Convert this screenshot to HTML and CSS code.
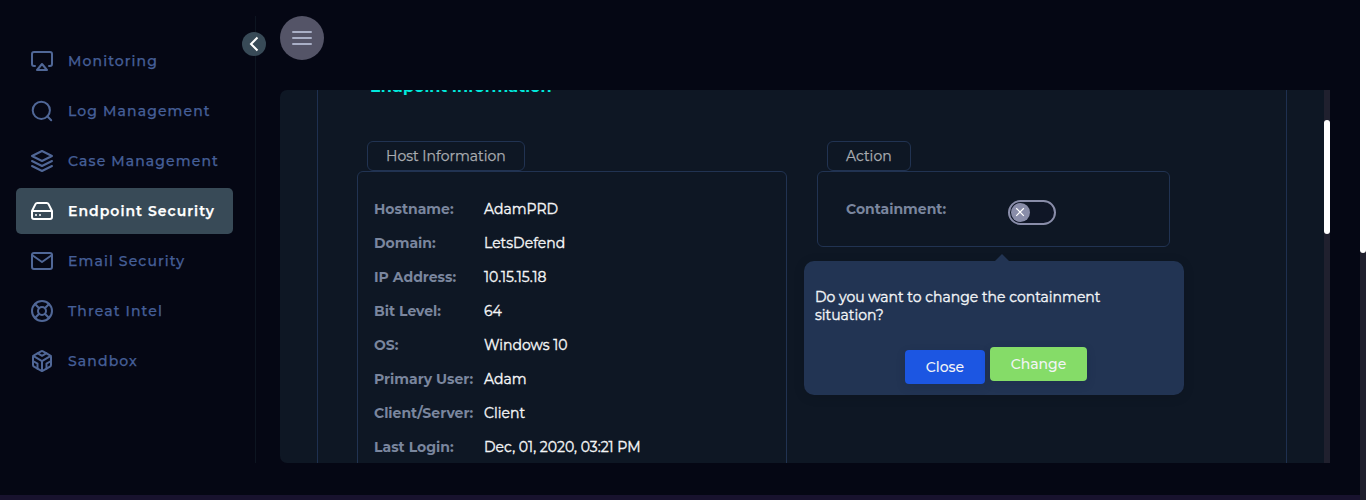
FILE: index.html
```html
<!DOCTYPE html>
<html lang="en">
<head>
<meta charset="utf-8">
<title>Endpoint Security</title>
<link rel="stylesheet" href="styles.css">
</head>
<body>
<div class="app">
  <div class="main">
    <aside class="sidebar">
      <nav class="nav">
        <a class="item"><svg class="icon" viewBox="0 0 24 24"><path d="M5 17H4a2 2 0 0 1-2-2V5a2 2 0 0 1 2-2h16a2 2 0 0 1 2 2v10a2 2 0 0 1-2 2h-1"/><path d="M12 15l5 6H7z"/></svg><span>Monitoring</span></a>
        <a class="item"><svg class="icon" viewBox="0 0 24 24"><circle cx="11.3" cy="11.3" r="8.6"/><path d="M21.2 21.2l-3.9-3.9"/></svg><span>Log Management</span></a>
        <a class="item"><svg class="icon" viewBox="0 0 24 24"><path d="M12 2L2 7l10 5 10-5z"/><path d="M2 17l10 5 10-5M2 12l10 5 10-5"/></svg><span>Case Management</span></a>
        <a class="item active"><svg class="icon" viewBox="0 0 24 24"><path d="M22 12H2M5.45 5.11L2 12v6a2 2 0 0 0 2 2h16a2 2 0 0 0 2-2v-6l-3.45-6.89A2 2 0 0 0 16.76 4H7.24a2 2 0 0 0-1.79 1.11zM6 16h.01M10 16h.01"/></svg><span>Endpoint Security</span></a>
        <a class="item"><svg class="icon" viewBox="0 0 24 24"><path d="M4 4h16a2 2 0 0 1 2 2v12a2 2 0 0 1-2 2H4a2 2 0 0 1-2-2V6a2 2 0 0 1 2-2z"/><path d="M22 6l-10 7L2 6"/></svg><span>Email Security</span></a>
        <a class="item"><svg class="icon" viewBox="0 0 24 24"><circle cx="12" cy="12" r="10"/><circle cx="12" cy="12" r="4"/><path d="M4.93 4.93l4.24 4.24M14.83 14.83l4.24 4.24M14.83 9.17l4.24-4.24M4.93 19.07l4.24-4.24"/></svg><span>Threat Intel</span></a>
        <a class="item"><svg class="icon" viewBox="0 0 24 24"><path d="M21 16V8a2 2 0 0 0-1-1.73l-7-4a2 2 0 0 0-2 0l-7 4A2 2 0 0 0 3 8v8a2 2 0 0 0 1 1.73l7 4a2 2 0 0 0 2 0l7-4A2 2 0 0 0 21 16z"/><path d="M7.5 4.21l4.5 2.6 4.5-2.6M7.5 19.79V14.6L3 12M21 12l-4.5 2.6v5.19M3.27 6.96L12 12.01l8.73-5.05M12 22.08V12"/></svg><span>Sandbox</span></a>
      </nav>
      <button class="collapse" aria-label="Collapse"><svg viewBox="0 0 24 24"><path d="M15.5 5.5l-6.5 6.5 6.5 6.5"/></svg></button>
    </aside>
    <main class="content">
      <button class="menu" aria-label="Menu"><i></i><i></i><i></i></button>
      <section class="panel">
        <div class="frame">
          <h2 class="heading">Endpoint Information</h2>
          <div class="columns">
            <div class="host">
              <div class="tab host-tab"><span>Host Information</span></div>
              <dl class="card details">
                <dt>Hostname:</dt><dd>AdamPRD</dd>
                <dt>Domain:</dt><dd>LetsDefend</dd>
                <dt>IP Address:</dt><dd>10.15.15.18</dd>
                <dt>Bit Level:</dt><dd>64</dd>
                <dt>OS:</dt><dd>Windows 10</dd>
                <dt>Primary User:</dt><dd>Adam</dd>
                <dt>Client/Server:</dt><dd>Client</dd>
                <dt>Last Login:</dt><dd>Dec, 01, 2020, 03:21 PM</dd>
              </dl>
            </div>
            <div class="action">
              <div class="tab action-tab"><span>Action</span></div>
              <div class="card containment">
                <span class="label">Containment:</span>
                <span class="switch"><svg viewBox="0 0 20 20"><path d="M5.5 5.5l8 8M13.5 5.5l-8 8"/></svg></span>
              </div>
              <div class="popover">
                <p class="question">Do you want to change the containment<br>situation?</p>
                <div class="buttons"><button class="btn close">Close</button><button class="btn change">Change</button></div>
              </div>
            </div>
          </div>
        </div>
        <div class="track"><div class="thumb"></div></div>
      </section>
    </main>
  </div>
  <div class="page-track"><div class="page-thumb"></div></div>
</div>
</body>
</html>
```
FILE: styles.css
```css
* { box-sizing: border-box; }
body { margin: 0; background: #050714; font-family: Montserrat, Inter, "Open Sans", sans-serif; font-size: 14px; color: #fff; overflow: hidden; }
button { border: 0; padding: 0; font: inherit; color: inherit; }
.app { display: flex; height: 500px; }
.main { display: flex; width: 1360px; border-bottom: 5px solid #18122e; }
.sidebar { position: relative; width: 256px; height: 447px; margin-top: 16px; padding: 22px 22px 0 16px; border-right: 1px solid #0d1521; }
.nav { display: flex; flex-direction: column; gap: 4px; }
.item { display: flex; align-items: center; gap: 14px; height: 46px; padding-left: 14px; border-radius: 5px; color: #455f98; font-weight: 500; letter-spacing: 1.12px; white-space: nowrap; -webkit-text-stroke: .25px currentColor; }
.active { background: #384a57; color: #fff; font-weight: 600; width: 217px; letter-spacing: 1.03px; }
.icon { width: 24px; height: 24px; flex: none; fill: none; stroke: #506797; stroke-width: 2; stroke-linecap: round; stroke-linejoin: round; }
.active .icon { stroke: #fff; }
.collapse { position: absolute; right: -11px; top: 16px; width: 24px; height: 24px; border-radius: 50%; background: #384a57; }
.collapse svg { display: block; width: 24px; height: 24px; fill: none; stroke: #fff; stroke-width: 2; }
.content { padding: 16px 0 0 24px; }
.menu { display: flex; flex-direction: column; align-items: center; justify-content: center; gap: 4px; width: 44px; height: 44px; border-radius: 50%; background: #545467; }
.menu i { width: 20px; height: 2px; background: #a9afc6; border-radius: 1px; }
.panel { display: flex; justify-content: space-between; width: 1050px; height: 373px; margin-top: 30px; border-radius: 7px 0 0 7px; background: #0e1724; overflow: hidden; }
.frame { width: 970px; margin-left: 37px; padding-left: 39px; border: 1px solid #1e3050; border-width: 0 1px; }
.heading { margin: -13px 0 0 13px; height: 20px; font-size: 16px; line-height: 20px; font-weight: 700; color: #00e8dc; white-space: nowrap; }
.columns { display: flex; gap: 30px; margin-top: 44px; }
.host { width: 430px; }
.action { position: relative; width: 353px; }
.tab { display: flex; align-items: center; height: 30px; margin-left: 10px; padding-left: 18px; border: 1px solid #213352; border-radius: 6px; color: #a9acb0; -webkit-text-stroke: .25px currentColor; }
.host-tab { width: 158px; }
.action-tab { width: 84px; }
.card { border: 1px solid #213352; border-radius: 6px; margin: 0; }
.details { display: grid; grid-template-columns: 110px 1fr; grid-auto-rows: 34px; align-items: center; height: 310px; padding: 20px 0 0 16px; white-space: nowrap; }
.details dt, .label { color: #7a869e; font-weight: 700; }
.details dd { margin: 0; color: #f4f5f6; font-weight: 400; -webkit-text-stroke: .35px currentColor; }
.containment { display: flex; height: 76px; padding: 28px 0 0 28px; }
.label { width: 162px; height: 18px; line-height: 18px; white-space: nowrap; }
.switch { width: 48px; height: 25px; border: 2px solid #898da9; border-radius: 13px; padding: 1px; background: #0f1626; }
.switch svg { display: block; width: 19px; height: 19px; border-radius: 50%; background: #898da9; stroke: #fff; stroke-width: 1.3; fill: none; }
.popover { position: absolute; left: -13px; top: 120px; width: 380px; height: 134px; padding: 27px 11px 0; border-radius: 10px; background: #223453; box-shadow: 0 2px 12px rgba(0,0,0,.12); color: #f2f4f7; }
.popover::before { content: ""; position: absolute; left: 191px; top: -7px; border: 7px solid transparent; border-top: 0; border-bottom-color: #223453; }
.question { margin: 0; line-height: 18px; font-weight: 400; white-space: nowrap; -webkit-text-stroke: .35px currentColor; }
.buttons { display: flex; gap: 5px; margin: 23px 0 0 90px; }
.btn { height: 34px; border-radius: 4px; font-weight: 500; box-shadow: 0 3px 8px rgba(20,35,65,.22); }
.close { width: 80px; margin-top: 3px; background: #1c56e2; }
.change { width: 97px; background: #85dc68; }
.track { width: 6px; background: #20202e; padding-top: 30px; }
.thumb { height: 114px; border-radius: 3px; background: #fff; }
.page-track { width: 6px; background: #20202e; }
.page-thumb { height: 253px; border-radius: 0 0 3px 3px; background: #fff; }
```
